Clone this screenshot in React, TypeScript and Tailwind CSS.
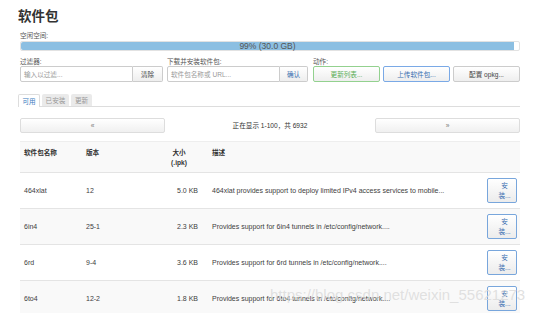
import React from 'react';

const packages = [
  { name: '464xlat', version: '12', size: '5.0 KB', desc: '464xlat provides support to deploy limited IPv4 access services to mobile...' },
  { name: '6in4', version: '25-1', size: '2.3 KB', desc: 'Provides support for 6in4 tunnels in /etc/config/network....' },
  { name: '6rd', version: '9-4', size: '3.6 KB', desc: 'Provides support for 6rd tunnels in /etc/config/network....' },
  { name: '6to4', version: '12-2', size: '1.8 KB', desc: 'Provides support for 6to4 tunnels in /etc/config/network....' },
];

const font = { fontFamily: '"Liberation Sans", "Noto Sans CJK SC", sans-serif' };

const App: React.FC = () => {
  return (
    <div
      className="relative h-[313px] w-[554px] overflow-hidden bg-white text-[6.6px] leading-[9px] text-[#404040]"
      style={font}
    >
      <div className="w-[520px] pl-[20px] pt-[8px]">
        <h2 className="-ml-[2px] text-[13.5px] leading-[18px] font-bold text-[#333]">软件包</h2>

        <div className="mt-[5px] text-[#555]">空闲空间:</div>
        <div className="mt-[1px] flex h-[10px] rounded-[2px] border border-[#e2e2e2] bg-white">
          <div className="flex w-[99%] items-center justify-center rounded-l-[2px] bg-[#8cbfe2] text-[8.5px] text-[#555]">
            99% (30.0 GB)
          </div>
        </div>

        <div className="mt-[6px] flex gap-[4px]">
          <div className="w-[143px]">
            <div className="text-[#555]">过滤器:</div>
            <div className="flex h-[16px]">
              <div className="flex flex-1 items-center rounded-l-[2px] border border-[#ccc] px-[3px] text-[#999]">输入以过滤...</div>
              <button className="w-[30px] rounded-r-[2px] border border-l-0 border-[#ccc] bg-gradient-to-b from-white to-[#eee] text-[#444]">清除</button>
            </div>
          </div>
          <div className="w-[141px]">
            <div className="text-[#555]">下载并安装软件包:</div>
            <div className="flex h-[16px]">
              <div className="flex flex-1 items-center rounded-l-[2px] border border-[#ccc] px-[3px] text-[#999]">软件包名称或 URL...</div>
              <button className="w-[28px] rounded-r-[2px] border border-l-0 border-[#ccc] bg-gradient-to-b from-white to-[#eee] text-[#3a6fb0]">确认</button>
            </div>
          </div>
          <div className="ml-[1px] flex-1">
            <div className="text-[#555]">动作:</div>
            <div className="flex h-[16px] gap-[3px]">
              <button className="w-[67px] rounded-[2px] border border-[#93d18f] bg-gradient-to-b from-white to-[#eee] text-[#5cae56]">更新列表...</button>
              <button className="w-[67px] rounded-[2px] border border-[#7aa9e6] bg-gradient-to-b from-white to-[#eee] text-[#3a6fb0]">上传软件包...</button>
              <button className="w-[67px] rounded-[2px] border border-[#ccc] bg-gradient-to-b from-white to-[#eee] text-[#444]">配置 opkg...</button>
            </div>
          </div>
        </div>

        <div className="mt-[12px] flex h-[13px] items-end gap-[2px] border-b border-[#ddd]">
          <div className="-ml-[2px] -mb-px flex h-[13px] w-[22px] items-center justify-center rounded-t-[2px] border border-b-0 border-[#ddd] bg-white text-[#3a7bc0]">可用</div>
          <div className="flex h-[12px] w-[27px] items-center justify-center rounded-t-[2px] bg-[#eaeaea] text-[#999]">已安装</div>
          <div className="flex h-[12px] w-[21px] items-center justify-center rounded-t-[2px] bg-[#eaeaea] text-[#999]">更新</div>
        </div>

        <div className="mt-[11px] flex h-[15px] items-center">
          <button className="h-[15px] w-[145px] rounded-[2px] border border-[#ddd] bg-gradient-to-b from-white to-[#f0f0f0] text-[#777]">«</button>
          <div className="flex-1 text-center text-[#333]">正在显示 1-100，共 6932</div>
          <button className="h-[15px] w-[145px] rounded-[2px] border border-[#ddd] bg-gradient-to-b from-white to-[#f0f0f0] text-[#777]">»</button>
        </div>

        <div className="mt-[8px] border-t border-[#eee]">
          <div className="flex h-[30px] items-start bg-[#f9f9f9] pt-[6px] font-bold text-[#333]">
            <div className="w-[66px] pl-[4px]">软件包名称</div>
            <div className="w-[74px]">版本</div>
            <div className="w-[38px] text-center leading-[10px]">大小<br />(.ipk)</div>
            <div className="pl-[14px]">描述</div>
          </div>
          {packages.map((pkg, i) => (
            <div
              key={pkg.name}
              className={`flex h-[36px] items-center border-t border-[#e4e4e4] text-[7px] ${i % 2 === 1 ? 'bg-[#f9f9f9]' : 'bg-white'}`}
            >
              <div className="w-[66px] pl-[4px]">{pkg.name}</div>
              <div className="w-[74px]">{pkg.version}</div>
              <div className="w-[38px] text-right">{pkg.size}</div>
              <div className="flex-1 pl-[14px]">{pkg.desc}</div>
              <button className="mr-[3px] h-[25px] w-[30px] rounded-[2px] border border-[#78a6dc] bg-gradient-to-b from-white to-[#ececec] pl-[9px] pr-[4px] text-center text-[6.6px] leading-[10px] text-[#3a6fb0]">
                安装...
              </button>
            </div>
          ))}
        </div>
      </div>

      <div className="pointer-events-none absolute left-[270px] top-[286px] text-[15px] leading-[18px] text-[#d9d9d9]/80">
        https://blog.csdn.net/weixin_55621273
      </div>
    </div>
  );
};

export default App;
